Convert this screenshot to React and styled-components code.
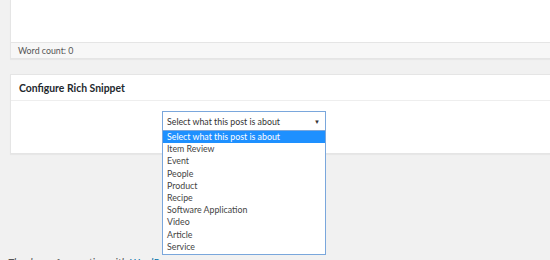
import styled, { createGlobalStyle } from "styled-components";

const GlobalStyle = createGlobalStyle`
  html, body {
    margin: 0;
    padding: 0;
    background: #f1f1f1;
    font-family: Lato, "Open Sans", sans-serif;
    color: #444;
    overflow: hidden;
  }
`;

const Page = styled.div`
  width: 570px;
  height: 260px;
  padding-left: 10px;
  box-sizing: border-box;
`;

const EditorBox = styled.div`
  background: #fff;
  border: 1px solid #e5e5e5;
  border-top: none;
  box-shadow: 0 1px 1px rgba(0, 0, 0, 0.04);
`;

const EditorArea = styled.div`
  height: 42px;
`;

const StatusBar = styled.div`
  height: 15px;
  border-top: 1px solid #e5e5e5;
  background: #f7f7f7;
  font-size: 8.8px;
  line-height: 16px;
  color: #555;
  padding-left: 7px;
`;

const Postbox = styled.div`
  margin-top: 15px;
  background: #fff;
  border: 1px solid #e5e5e5;
  box-shadow: 0 1px 1px rgba(0, 0, 0, 0.04);
`;

const PostboxTitle = styled.h2`
  margin: 0;
  height: 25px;
  border-bottom: 1px solid #eee;
  font-size: 10.4px;
  font-weight: 700;
  line-height: 26px;
  color: #23282d;
  padding-left: 8px;
`;

const Inside = styled.div`
  height: 52px;
  display: flex;
  justify-content: flex-start;
  padding: 10px 0 0 151px;
  box-sizing: border-box;
`;

const SelectWrap = styled.div`
  position: relative;
  width: 164px;
`;

const SelectBox = styled.div`
  height: 20px;
  box-sizing: border-box;
  border: 1px solid #7aa7dc;
  background: #fff;
  display: flex;
  align-items: center;
  justify-content: space-between;
  padding: 0 5px 0 4px;
  font-size: 8.8px;
  color: #333;
`;

const Arrow = styled.span`
  font-size: 6px;
  color: #333;
`;

const List = styled.ul`
  position: absolute;
  top: 20px;
  left: 0;
  width: 164px;
  box-sizing: border-box;
  margin: 0;
  padding: 0 0 1px;
  list-style: none;
  background: #fff;
  border: 1px solid #7aa7dc;
  border-top: none;
  z-index: 2;
`;

const Option = styled.li`
  height: 12.2px;
  line-height: 12.2px;
  padding-left: 4px;
  font-size: 8.8px;
  white-space: nowrap;
  color: ${(p) => (p.$active ? "#fff" : "#444")};
  background: ${(p) => (p.$active ? "#1e90ff" : "transparent")};
`;

const Footer = styled.p`
  margin: 103px 0 0 -2px;
  font-size: 10.5px;
  font-style: italic;
  color: #555;
`;

const Link = styled.a`
  color: #0073aa;
  text-decoration: none;
`;

const options = [
  "Select what this post is about",
  "Item Review",
  "Event",
  "People",
  "Product",
  "Recipe",
  "Software Application",
  "Video",
  "Article",
  "Service",
];

export default function App() {
  return (
    <>
      <GlobalStyle />
      <Page>
        <EditorBox>
          <EditorArea />
          <StatusBar>Word count: 0</StatusBar>
        </EditorBox>
        <Postbox>
          <PostboxTitle>Configure Rich Snippet</PostboxTitle>
          <Inside>
            <SelectWrap>
              <SelectBox>
                <span>Select what this post is about</span>
                <Arrow>▼</Arrow>
              </SelectBox>
              <List>
                {options.map((o, i) => (
                  <Option key={o} $active={i === 0}>
                    {o}
                  </Option>
                ))}
              </List>
            </SelectWrap>
          </Inside>
        </Postbox>
        <Footer>
          Thank you for creating with <Link href="#">WordPress</Link>.
        </Footer>
      </Page>
    </>
  );
}
